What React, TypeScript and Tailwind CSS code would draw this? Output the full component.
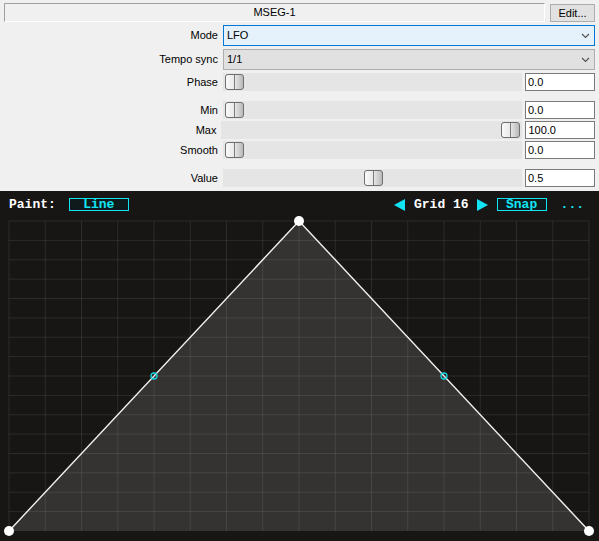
import React from 'react';

const sans = { fontFamily: '"Liberation Sans", Arial, sans-serif' };

const Chevron = () => (
    <svg width="9" height="6" viewBox="0 0 9 6" className="shrink-0">
        <path d="M1 1 L4.5 4.5 L8 1" fill="none" stroke="#505050" strokeWidth="1.1" />
    </svg>
);

const Thumb = ({ offset }: { offset: number }) => (
    <div
        className="flex h-[16px] w-[19px] shrink-0 justify-center rounded-[3px] border border-[#6f6f6f] bg-gradient-to-r from-[#fafafa] via-[#e8e8e8] to-[#b9b9b9]"
        style={{ marginLeft: offset }}
    >
        <div className="h-full w-px bg-[#7c7c7c]" />
    </div>
);

interface SliderRowProps {
    label: string;
    value: number;
    min: number;
    max: number;
    text: string;
}

const SliderRow: React.FC<SliderRowProps> = ({ label, value, min, max, text }) => {
    // thumb travel inside the track is 278px
    const offset = Math.round(((value - min) / (max - min)) * 278);
    return (
        <div className="flex h-[18px] items-center pr-[4px]">
            <div className="w-[219px] pr-px text-right">{label}</div>
            <div className="ml-[4px] flex h-full flex-1 items-center bg-[#e5e5e5] px-[2px]">
                <Thumb offset={offset} />
            </div>
            <div className="ml-[3px] flex h-full w-[70px] items-center border border-[#7a7a7a] bg-white px-[2px]">
                {text}
            </div>
        </div>
    );
};

const ComboRow = ({ label, value, active }: { label: string; value: string; active?: boolean }) => (
    <div className="flex h-[21px] items-center pr-[4px]">
        <div className="w-[219px] pr-px text-right">{label}</div>
        <div
            className={`ml-[4px] flex h-full flex-1 items-center justify-between border pl-[3px] pr-[4px] ${
                active ? 'border-[#0078d7] bg-[#e5f1fb]' : 'border-[#adadad] bg-[#e1e1e1]'
            }`}
        >
            <span>{value}</span>
            <Chevron />
        </div>
    </div>
);

// graph geometry (svg coords)
const GX0 = 9;
const GX1 = 589;
const GY0 = 10;
const GY1 = 320;
const DIV = 16;

const MsegGraph = () => {
    const xs = Array.from({ length: DIV + 1 }, (_, i) => GX0 + ((GX1 - GX0) * i) / DIV);
    const ys = Array.from({ length: DIV }, (_, i) => GY0 + ((GY1 - GY0) * i) / DIV);
    const midX = (GX0 + GX1) / 2;
    const pts = `${GX0},${GY1} ${midX},${GY0} ${GX1},${GY1}`;
    return (
        <svg width="599" height="330" className="block">
            <polygon points={pts} fill="#343332" />
            {xs.map((x, i) => (
                <line key={'v' + i} x1={x} y1={GY0} x2={x} y2={GY1} stroke="rgba(255,255,255,0.09)" strokeWidth="1" />
            ))}
            {ys.map((y, i) => (
                <line key={'h' + i} x1={GX0} y1={y} x2={GX1} y2={y} stroke="rgba(255,255,255,0.09)" strokeWidth="1" />
            ))}
            <polyline points={pts} fill="none" stroke="#f2f2f2" strokeWidth="1.4" />
            <circle cx={(GX0 + midX) / 2} cy={(GY0 + GY1) / 2} r="3" fill="none" stroke="#19d3e0" strokeWidth="1.3" />
            <circle cx={(midX + GX1) / 2} cy={(GY0 + GY1) / 2} r="3" fill="none" stroke="#19d3e0" strokeWidth="1.3" />
            <circle cx={GX0} cy={GY1} r="5" fill="#ffffff" />
            <circle cx={midX} cy={GY0} r="5" fill="#ffffff" />
            <circle cx={GX1} cy={GY1} r="5" fill="#ffffff" />
        </svg>
    );
};

const Triangle = ({ dir }: { dir: 'left' | 'right' }) => (
    <svg width="11" height="12" viewBox="0 0 11 12" className="shrink-0">
        <path d={dir === 'left' ? 'M11 0 L11 12 L0 6 Z' : 'M0 0 L0 12 L11 6 Z'} fill="#12e4f4" />
    </svg>
);

export default function App() {
    return (
        <div className="flex h-[541px] w-[599px] flex-col overflow-hidden bg-[#f0f0f0] text-[11px] text-black" style={sans}>
            {/* properties panel */}
            <div className="flex flex-col pt-[3px]">
                <div className="flex h-[19px] items-start pl-[4px] pr-[4px]">
                    <div className="flex h-[19px] w-[541px] items-center justify-center border border-b-white border-l-[#a0a0a0] border-r-white border-t-[#a0a0a0]">
                        MSEG-1
                    </div>
                    <div className="ml-[5px] mt-px flex h-[18px] flex-1 items-center justify-center border border-[#adadad] bg-[#e1e1e1]">
                        Edit...
                    </div>
                </div>
                <div className="mt-[3px] flex flex-col gap-[3px]">
                    <ComboRow label="Mode" value="LFO" active />
                    <ComboRow label="Tempo sync" value="1/1" />
                </div>
                <div className="mt-[3px]">
                    <SliderRow label="Phase" value={0} min={0} max={1} text="0.0" />
                </div>
                <div className="mt-[10px] flex flex-col gap-[2px]">
                    <SliderRow label="Min" value={0} min={0} max={100} text="0.0" />
                    <SliderRow label="Max" value={100} min={0} max={100} text="100.0" />
                    <SliderRow label="Smooth" value={0} min={0} max={1} text="0.0" />
                </div>
                <div className="mt-[10px]">
                    <SliderRow label="Value" value={0.5} min={0} max={1} text="0.5" />
                </div>
            </div>

            {/* MSEG editor */}
            <div className="mt-[4px] flex flex-1 flex-col bg-[#171615]">
                <div
                    className="flex h-[20px] items-end pl-[9px] pr-[15px] text-[13px] font-bold leading-none"
                    style={{ fontFamily: '"Liberation Mono", "Courier New", monospace' }}
                >
                    <span className="flex h-[13px] items-center text-white">Paint:</span>
                    <div className="ml-[13px] flex h-[13px] w-[60px] items-center justify-center border border-[#12e4f4] bg-[#0f1a1c] text-[#12e4f4]">
                        Line
                    </div>
                    <div className="ml-auto flex h-[13px] items-center">
                        <Triangle dir="left" />
                        <span className="ml-[9px] whitespace-pre text-white">Grid 16</span>
                        <div className="ml-[8px] flex">
                            <Triangle dir="right" />
                        </div>
                        <div className="ml-[9px] flex h-[13px] w-[50px] items-center justify-center border border-[#12e4f4] bg-[#0f1a1c] text-[#12e4f4]">
                            Snap
                        </div>
                        <span className="ml-[14px] text-[#12e4f4]">...</span>
                    </div>
                </div>
                <MsegGraph />
            </div>
        </div>
    );
}
